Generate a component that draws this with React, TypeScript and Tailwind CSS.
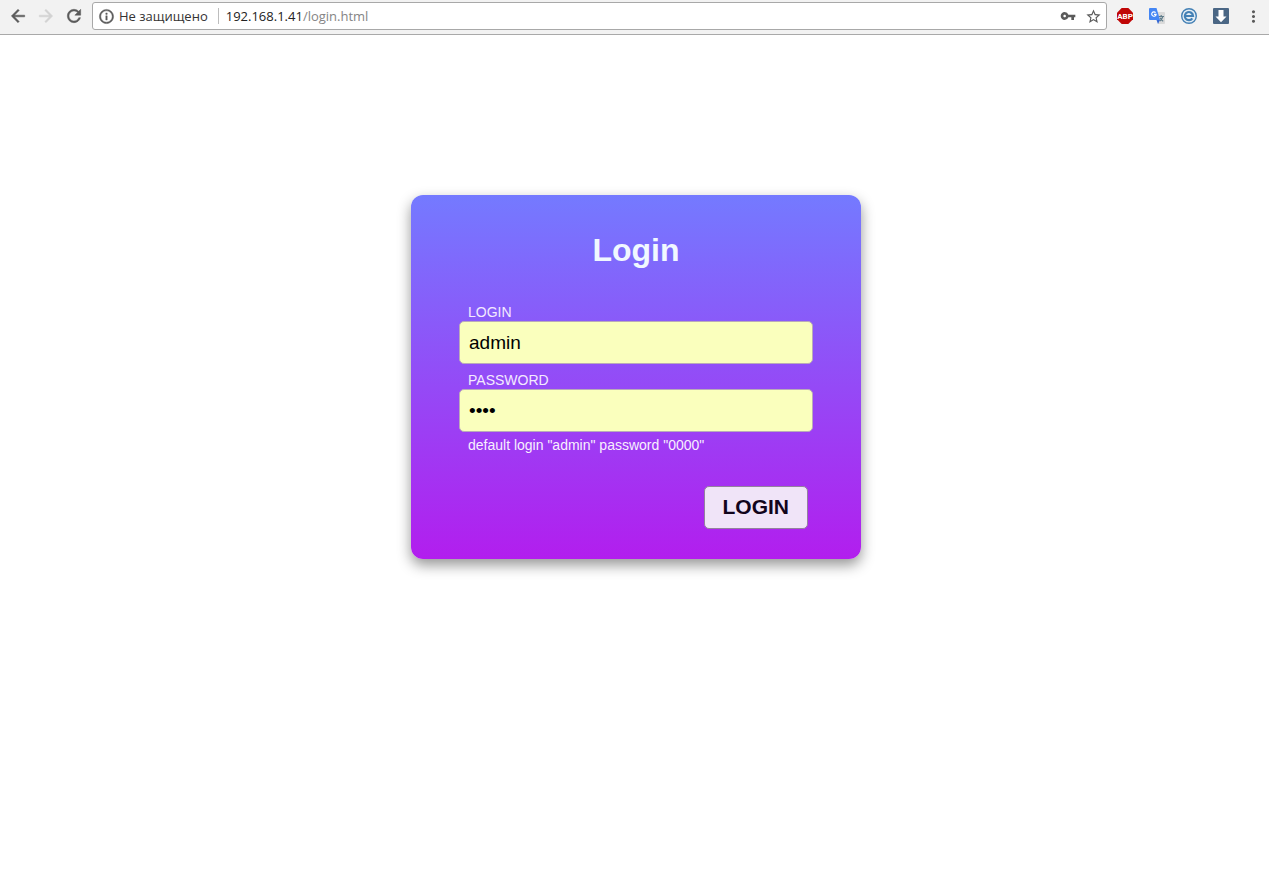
import { useState } from "react";
import { MdMoreVert, MdStarBorder, MdVpnKey } from "react-icons/md";

export default function App() {
  return (
    <div className="flex min-h-screen flex-col bg-white font-['Liberation_Sans',Arial,sans-serif]">
      <BrowserBar />
      <main className="flex flex-1 items-start justify-center pl-[3px] pt-40">
        <LoginCard />
      </main>
    </div>
  );
}

/* ─── Browser toolbar ─── */

const ICON_PATHS = {
  back: "M20 11H7.83l5.59-5.59L12 4l-8 8 8 8 1.41-1.41L7.83 13H20v-2z",
  forward: "M12 4l-1.41 1.41L16.17 11H4v2h12.17l-5.58 5.59L12 20l8-8z",
  reload:
    "M17.65 6.35C16.2 4.9 14.21 4 12 4c-4.42 0-7.99 3.58-7.99 8s3.57 8 7.99 8c3.73 0 6.84-2.55 7.73-6h-2.08c-.82 2.33-3.04 4-5.65 4-3.31 0-6-2.69-6-6s2.69-6 6-6c1.66 0 3.14.69 4.22 1.78L13 11h7V4l-2.35 2.35z",
  info: "M11 17h2v-6h-2v6zm1-15C6.48 2 2 6.48 2 12s4.48 10 10 10 10-4.48 10-10S17.52 2 12 2zm0 18c-4.41 0-8-3.59-8-8s3.59-8 8-8 8 3.59 8 8-3.59 8-8 8zM11 9h2V7h-2v2z",
};

function BrowserBar() {
  return (
    <header className="flex h-[35px] items-start border-b border-[#a9a9a9] bg-[#f2f2f2] pl-1 pt-0.5 font-['Open_Sans','Noto_Sans',sans-serif]">
      <nav className="flex h-7 items-center">
        <button type="button" aria-label="Back" className="flex w-7 justify-center text-[#5a5a5a]">
          <BarIcon name="back" size={20} />
        </button>
        <button type="button" aria-label="Forward" disabled className="flex w-7 justify-center text-[#d2d2d2]">
          <BarIcon name="forward" size={20} />
        </button>
        <button type="button" aria-label="Reload" className="flex w-7 justify-center text-[#5a5a5a]">
          <BarIcon name="reload" size={20} />
        </button>
      </nav>

      <div className="ml-1 flex h-7 flex-1 items-center rounded-[3px] border border-[#a8a8a8] bg-white pl-[5px] pr-1 text-[13px]">
        <button type="button" className="flex items-center gap-1 whitespace-nowrap text-[#333]">
          <span className="text-[#5a5a5a]">
            <BarIcon name="info" size={17} />
          </span>
          <span className="pt-0.5">Не защищено</span>
        </button>
        <span className="ml-2.5 mr-[7px] h-4 w-px bg-[#bdbdbd]" />
        <p className="flex-1 pt-0.5 text-[#222]">
          192.168.1.41<span className="text-[#858585]">/login.html</span>
        </p>
        <button type="button" aria-label="Saved passwords" className="flex w-[25px] justify-center text-[#5a5a5a]">
          <MdVpnKey size={16} />
        </button>
        <button type="button" aria-label="Bookmark this page" className="ml-1 flex w-[18px] justify-center text-[#5a5a5a]">
          <MdStarBorder size={17} />
        </button>
      </div>

      <div className="ml-0.5 flex h-7 items-center">
        <button type="button" aria-label="Adblock Plus" className="flex w-8 justify-center">
          <AdblockIcon />
        </button>
        <button type="button" aria-label="Translate" className="flex w-8 justify-center">
          <TranslateIcon />
        </button>
        <button type="button" aria-label="Open in IE" className="flex w-8 justify-center">
          <ExplorerIcon />
        </button>
        <button type="button" aria-label="Downloads" className="flex w-8 justify-center">
          <DownloadIcon />
        </button>
        <button type="button" aria-label="Menu" className="flex w-8 justify-center text-[#5a5a5a]">
          <MdMoreVert size={19} />
        </button>
      </div>
    </header>
  );
}

function BarIcon({ name, size }: { name: keyof typeof ICON_PATHS; size: number }) {
  return (
    <svg width={size} height={size} viewBox="0 0 24 24" fill="currentColor" stroke="currentColor" strokeWidth="0.6">
      <path d={ICON_PATHS[name]} />
    </svg>
  );
}

/* ─── Login form ─── */

function LoginCard() {
  const [login, setLogin] = useState("admin");
  const [password, setPassword] = useState("0000");

  return (
    <form
      onSubmit={(e) => e.preventDefault()}
      className="w-full max-w-[450px] rounded-xl bg-linear-to-b/srgb from-[#747aff] to-[#b21eee] px-12 pb-[30px] pt-[35px] shadow-[0_6px_14px_rgba(0,0,0,0.42)]"
    >
      <h1 className="mb-[33px] text-center text-[32px] font-bold leading-10 text-[#f0f8ff]">Login</h1>

      <Field id="login" label="LOGIN" type="text" value={login} onChange={setLogin} />
      <Field id="password" label="PASSWORD" type="password" value={password} onChange={setPassword} />

      <p className="pl-[9px] text-[14px] leading-3 text-[#f7effe]">default login "admin" password "0000"</p>

      <div className="mt-[35px] flex justify-end pr-[5px]">
        <button
          type="submit"
          className="h-[43px] rounded-[5px] border border-[#94809f] bg-[#f0e4f8] px-[18px] pb-0.5 text-[21px] font-bold leading-none text-[#12041c]"
        >
          LOGIN
        </button>
      </div>
    </form>
  );
}

function Field({
  id,
  label,
  type,
  value,
  onChange,
}: {
  id: string;
  label: string;
  type: string;
  value: string;
  onChange: (value: string) => void;
}) {
  return (
    <div className="mb-[7px]">
      <label htmlFor={id} className="block py-px pl-[9px] text-[14px] leading-4 text-[#f3eaff]">
        {label}
      </label>
      <input
        id={id}
        type={type}
        value={value}
        onChange={(e) => onChange(e.target.value)}
        className="block h-[43px] w-full rounded-[5px] border border-[#b9aab9] bg-[#faffbd] px-[9px] text-[19px] text-black outline-none"
      />
    </div>
  );
}

/* ─── Extension icons ─── */

function AdblockIcon() {
  return (
    <svg width="16" height="16" viewBox="0 0 16 16">
      <path d="M4.7 0h6.6L16 4.7v6.6L11.3 16H4.7L0 11.3V4.7z" fill="#c00606" />
      <text
        x="8"
        y="11"
        textAnchor="middle"
        fontSize="8"
        fontWeight="700"
        fontFamily="Liberation Sans Narrow, Roboto, sans-serif"
        fill="#fff"
      >
        ABP
      </text>
    </svg>
  );
}

function TranslateIcon() {
  return (
    <svg width="16" height="16" viewBox="0 0 16 16">
      <path d="M6 4h9a1 1 0 0 1 1 1v10a1 1 0 0 1-1 1H9z" fill="#dadada" />
      <path
        d="M9.5 8.500h5.500M12.200 7v1.500M13.800 8.500c-.5 2-1.600 3.600-3 4.500M11 9.800c.6 1.400 1.600 2.500 3.200 3.400"
        fill="none"
        stroke="#607d8b"
        strokeWidth="1.2"
      />
      <path d="M1 0h6.500L11 12H1a1 1 0 0 1-1-1V1a1 1 0 0 1 1-1z" fill="#4486f4" />
      <path d="M7.5 12H11l-2 4z" fill="#3367d6" />
      <path d="M6.6 4.600A2.200 2.200 0 1 0 7.100 6.300H5" fill="none" stroke="#fff" strokeWidth="1.2" />
    </svg>
  );
}

function ExplorerIcon() {
  return (
    <svg width="16" height="16" viewBox="0 0 16 16">
      <circle cx="8" cy="8" r="7.300" fill="#e4edf4" stroke="#4380b5" strokeWidth="1.4" />
      <path d="M3.500 8h8.500A4.100 4.100 0 1 0 11.300 10.400" fill="none" stroke="#4380b5" strokeWidth="2.2" />
    </svg>
  );
}

function DownloadIcon() {
  return (
    <svg width="16" height="16" viewBox="0 0 16 16">
      <rect width="16" height="16" rx="1" fill="#4b6785" />
      <path d="M5.500 2h5v6.500h3L8 14.200 2.500 8.500h3z" fill="#fff" />
    </svg>
  );
}
